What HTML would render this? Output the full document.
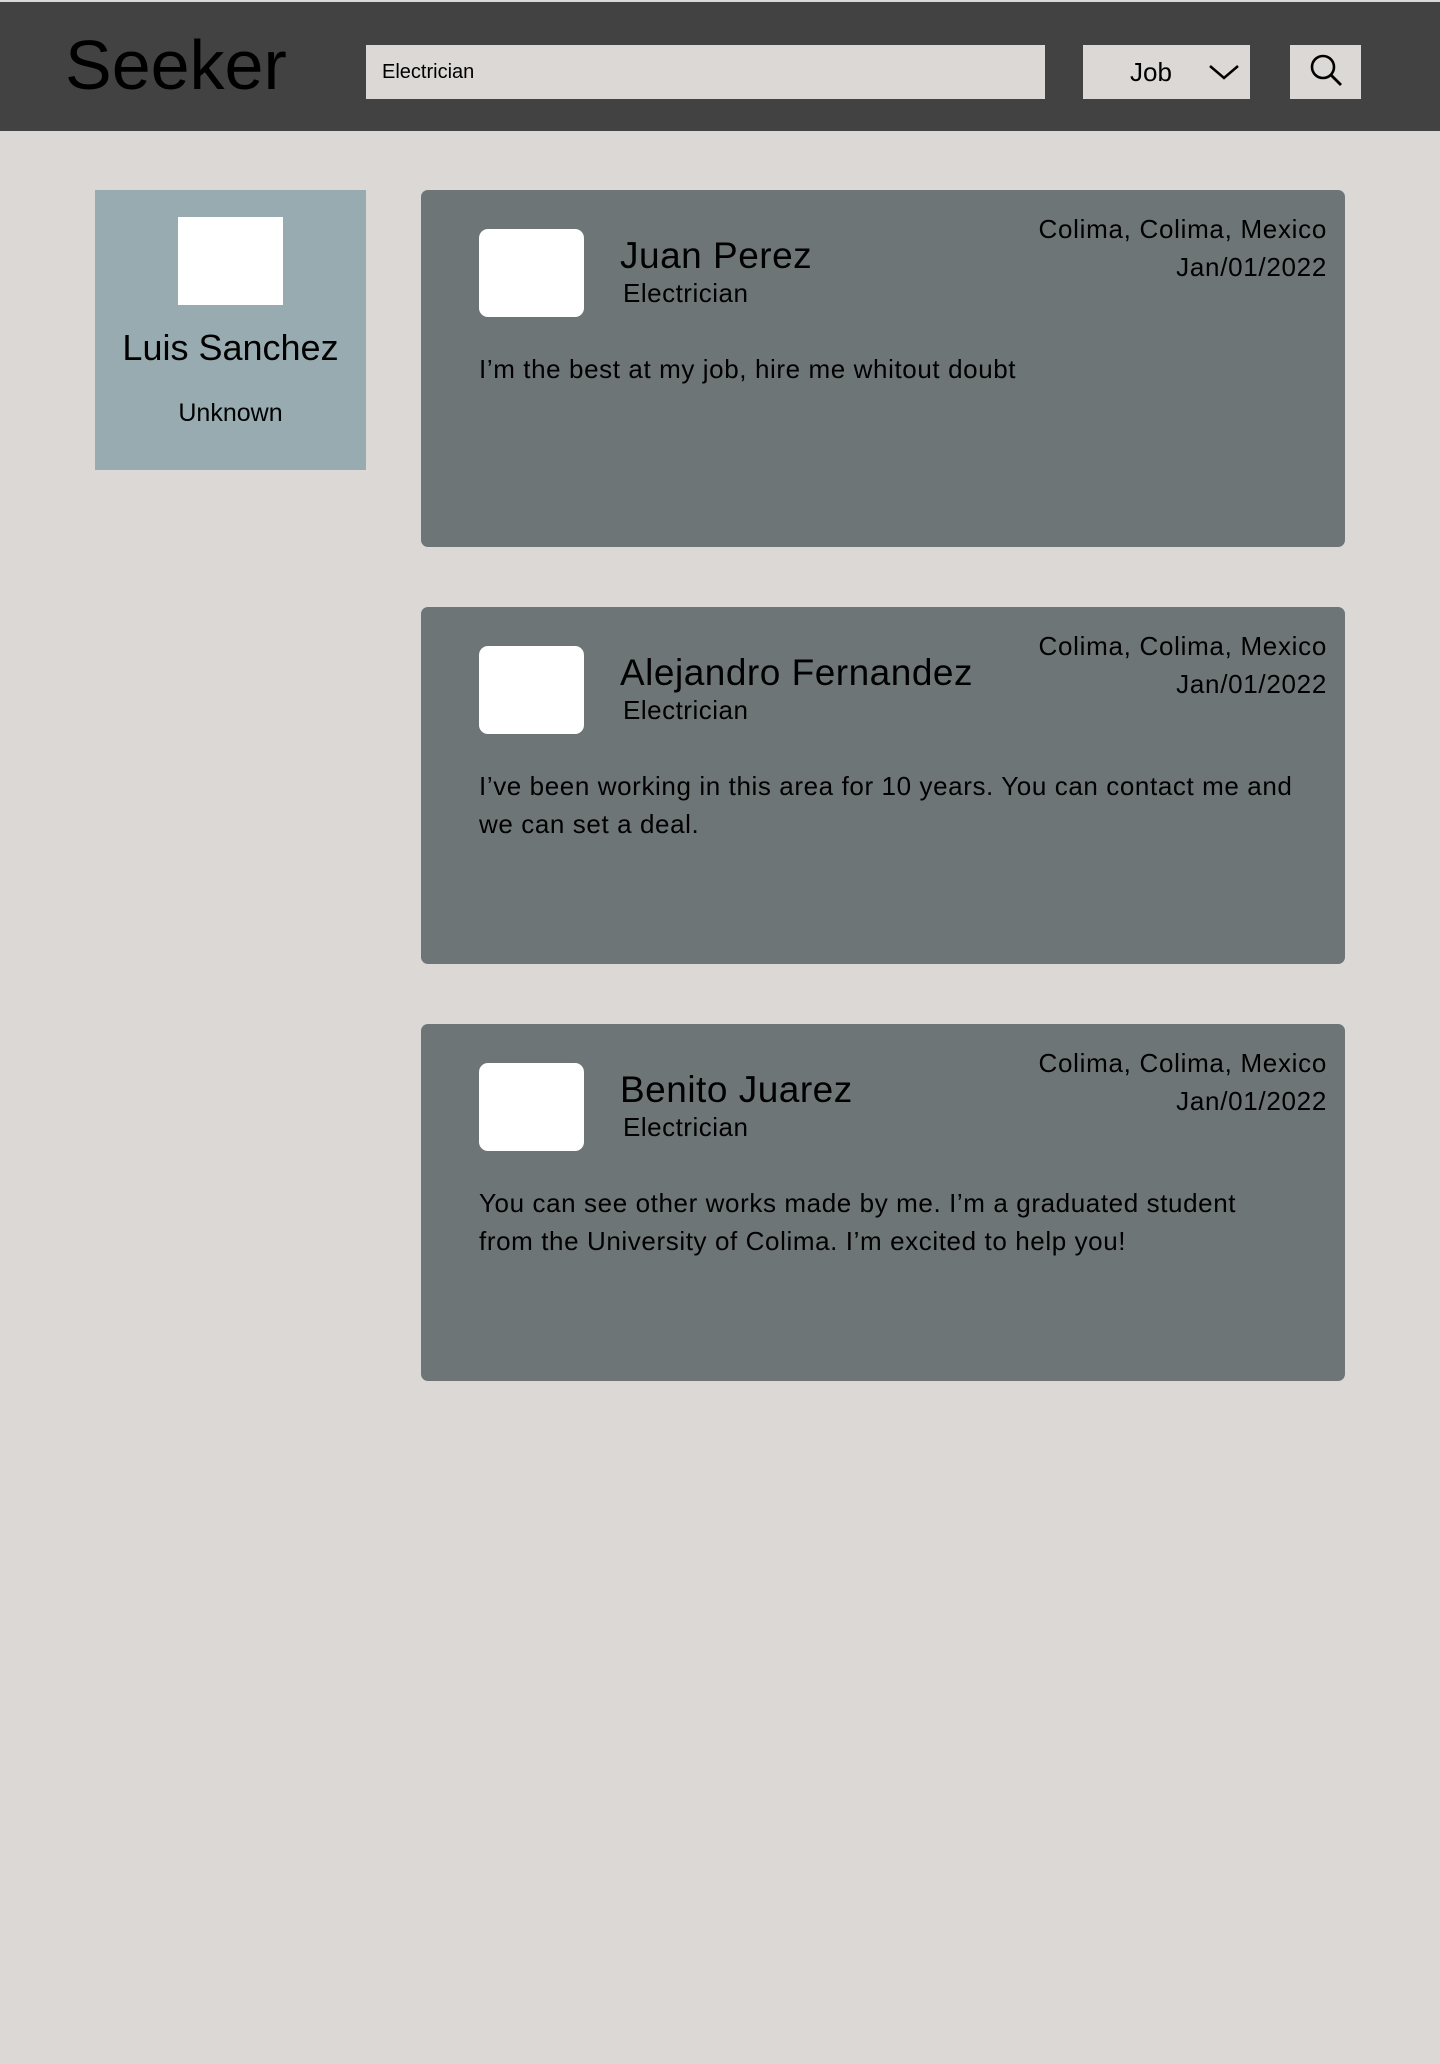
<!DOCTYPE html>
<html><head><meta charset="utf-8"><style>
*{margin:0;padding:0;box-sizing:border-box}
body{width:1440px;height:2064px;background:#dbd8d5;font-family:"Liberation Sans",sans-serif;color:#000;position:relative;overflow:hidden}
.hdr{position:absolute;left:0;top:2px;width:1440px;height:129px;background:#424242}
.logo{position:absolute;left:65px;top:23px;font-size:70px;line-height:80px}
.inp{position:absolute;left:366px;top:43px;width:679px;height:54px;background:#dbd8d5;font-size:20px;line-height:54px;padding-left:16px}
.job{position:absolute;left:1083px;top:43px;width:167px;height:54px;background:#dbd8d5;font-size:26px;line-height:54px;padding-left:47px}
.srch{position:absolute;left:1290px;top:43px;width:71px;height:54px;background:#dbd8d5}
.side{position:absolute;left:95px;top:190px;width:271px;height:280px;background:#97abb0;text-align:center}
.side .av{position:absolute;left:83px;top:27px;width:105px;height:88px;background:#fff}
.side .n{position:absolute;left:0;width:271px;top:136px;font-size:36px;line-height:44px}
.side .u{position:absolute;left:0;width:271px;top:208px;font-size:25px;line-height:30px}
.card{position:absolute;left:421px;width:924px;height:357px;background:#6e7577;border-radius:7px}
.card .av{position:absolute;left:58px;top:39px;width:105px;height:88px;background:#fff;border-radius:9px}
.card .nm{position:absolute;left:199px;top:44px;font-size:37px;line-height:44px;letter-spacing:.5px}
.card .jb{position:absolute;left:202px;top:88px;font-size:26px;line-height:30px;letter-spacing:.5px}
.card .loc{position:absolute;right:18px;top:20px;font-size:26px;line-height:38px;text-align:right;letter-spacing:.7px}
.card .tx{position:absolute;left:58px;top:160px;white-space:nowrap;font-size:26px;line-height:38px;letter-spacing:.6px}
</style></head><body>
<div class="hdr">
<div class="logo">Seeker</div>
<div class="inp">Electrician</div>
<div class="job">Job<svg style="position:absolute;left:125px;top:17px" width="32" height="20" viewBox="0 0 32 20"><path d="M2 4 L16 16 L30 4" fill="none" stroke="#000" stroke-width="2.5"/></svg></div>
<div class="srch"><svg style="position:absolute;left:19px;top:8px" width="36" height="36" viewBox="0 0 36 36"><circle cx="14" cy="14" r="11" fill="none" stroke="#000" stroke-width="2.6"/><path d="M22 22 L32 32" stroke="#000" stroke-width="2.8"/></svg></div>
</div>
<div class="side"><div class="av"></div><div class="n">Luis Sanchez</div><div class="u">Unknown</div></div>

<div class="card" style="top:190px"><div class="av"></div><div class="nm">Juan Perez</div><div class="jb">Electrician</div><div class="loc">Colima, Colima, Mexico<br>Jan/01/2022</div><div class="tx">I’m the best at my job, hire me whitout doubt</div></div>

<div class="card" style="top:607px"><div class="av"></div><div class="nm">Alejandro Fernandez</div><div class="jb">Electrician</div><div class="loc">Colima, Colima, Mexico<br>Jan/01/2022</div><div class="tx">I’ve been working in this area for 10 years. You can contact me and<br>we can set a deal.</div></div>

<div class="card" style="top:1024px"><div class="av"></div><div class="nm">Benito Juarez</div><div class="jb">Electrician</div><div class="loc">Colima, Colima, Mexico<br>Jan/01/2022</div><div class="tx">You can see other works made by me. I’m a graduated student<br>from the University of Colima. I’m excited to help you!</div></div>
</body></html>
